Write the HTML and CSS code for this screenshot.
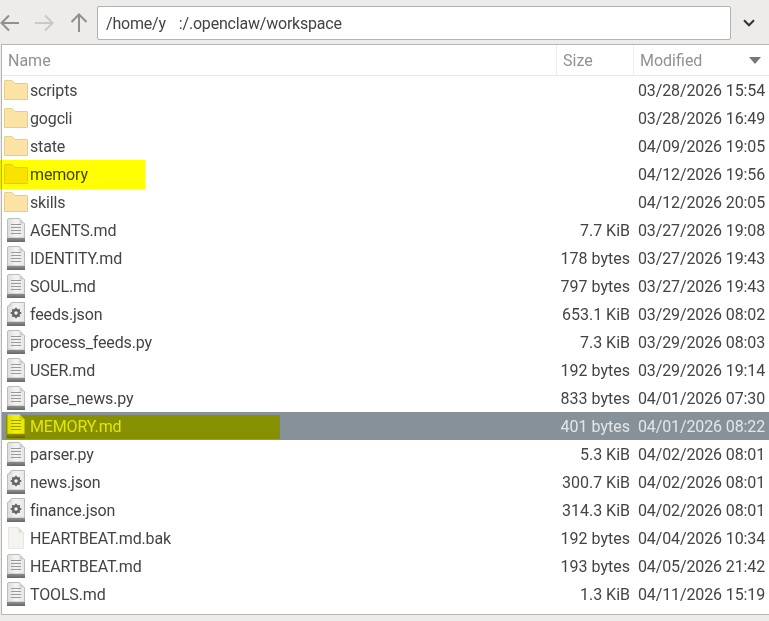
FILE: index.html
```html
<!DOCTYPE html>
<html lang="en">
<head>
<meta charset="utf-8">
<title>workspace</title>
<link rel="stylesheet" href="styles.css">
</head>
<body>
<svg class="defs" width="0" height="0" aria-hidden="true">
  <defs>
    <linearGradient id="shade" x1="0" y1="0" x2="0" y2="1">
      <stop offset="0" stop-color="#8f8f8f"/><stop offset="1" stop-color="#666"/>
    </linearGradient>
    <linearGradient id="paper" x1="0" y1="0" x2="1" y2="0">
      <stop offset="0" stop-color="#dcdcda"/><stop offset="0.5" stop-color="#f4f4f2"/><stop offset="1" stop-color="#e6e6e4"/>
    </linearGradient>
    <symbol id="folder" viewBox="0 0 24 20">
      <path d="M.5 19.500V1.200Q.5.5 1.200.5H8L11 3.500H23Q23.500 3.500 23.500 4V19.500Z" fill="#fae3a3" stroke="#e2cd92"/>
    </symbol>
    <symbol id="doc" viewBox="0 0 18 24">
      <path d="M.5 20V2Q.5.5 2 .5H12.500L17.500 5.500V20Z" fill="url(#paper)" stroke="#bcbcba"/>
      <path d="M12.500.5V5.500H17.500Z" fill="#d2d2d0"/>
      <rect x="0" y="20" width="18" height="4" fill="url(#shade)"/>
      <path d="M4 6.500H14M4 9.500H14M4 12.500H14M4 15.500H14" stroke="#9a9a9a" stroke-width="1.100"/>
    </symbol>
    <symbol id="cfg" viewBox="0 0 18 24">
      <path d="M.5 20V4.500L4.500.5H17.500V20Z" fill="url(#paper)" stroke="#bcbcba"/>
      <path d="M.5 4.500H4.500V.5Z" fill="#d2d2d0"/>
      <rect x="0" y="20" width="18" height="4" fill="url(#shade)"/>
      <circle cx="9" cy="11" r="3" fill="none" stroke="#666" stroke-width="2.400"/>
      <path d="M9 5.800V7.500M9 14.500V16.200M3.800 11H5.500M12.500 11H14.200M5.300 7.300L6.500 8.500M11.500 13.500L12.700 14.700M12.700 7.300L11.500 8.500M6.500 13.500L5.300 14.700" stroke="#666" stroke-width="1.800"/>
    </symbol>
    <symbol id="blank" viewBox="0 0 16 22">
      <path d="M.5 21.500V1Q.5.5 1 .5H10.500L15.500 5.500V21.500Z" fill="#f4f3f0" stroke="#e6e5e2"/>
      <path d="M10.500.5V5.500H15.500Z" fill="#dededc"/>
    </symbol>
  </defs>
</svg>

<div class="window">
  <header class="toolbar">
    <div class="nav">
      <svg class="nav-back" width="20" height="18" viewBox="0 0 20 18"><path d="M19 9H1.500M9 1.500L1.500 9L9 16.500" fill="none" stroke="#8f8f8f" stroke-width="2"/></svg>
      <svg class="nav-forward" width="20" height="18" viewBox="0 0 20 18"><path d="M1 9H18.500M11 1.500L18.500 9L11 16.500" fill="none" stroke="#c9c9c8" stroke-width="2"/></svg>
      <svg class="nav-up" width="18" height="20" viewBox="0 0 18 20"><path d="M9 19V1.500M1.500 9L9 1.500L16.500 9" fill="none" stroke="#8f8f8f" stroke-width="2"/></svg>
    </div>
    <div class="path"><span>/home/y</span><span class="path-gap"></span><span>:/.openclaw/workspace</span></div>
    <svg class="chevron" width="12" height="8" viewBox="0 0 12 8"><path d="M1 1.300L6 6.300L11 1.300" fill="none" stroke="#333" stroke-width="2"/></svg>
  </header>

  <main class="list">
    <div class="head">
      <div class="head-name">Name</div>
      <div class="head-size">Size</div>
      <div class="head-mod"><span>Modified</span><span class="sort"></span></div>
    </div>
    <div class="rows">
      <div class="row"><svg class="ico-folder"><use href="#folder"/></svg><span class="name">scripts</span><span class="size"></span><span class="date">03/28/2026 15:54</span></div>
      <div class="row"><svg class="ico-folder"><use href="#folder"/></svg><span class="name">gogcli</span><span class="size"></span><span class="date">03/28/2026 16:49</span></div>
      <div class="row"><svg class="ico-folder"><use href="#folder"/></svg><span class="name">state</span><span class="size"></span><span class="date">04/09/2026 19:05</span></div>
      <div class="row"><svg class="ico-folder"><use href="#folder"/></svg><span class="name">memory</span><span class="size"></span><span class="date">04/12/2026 19:56</span><span class="mark mark-folder"></span></div>
      <div class="row"><svg class="ico-folder"><use href="#folder"/></svg><span class="name">skills</span><span class="size"></span><span class="date">04/12/2026 20:05</span></div>
      <div class="row"><svg class="ico-file"><use href="#doc"/></svg><span class="name">AGENTS.md</span><span class="size">7.7 KiB</span><span class="date">03/27/2026 19:08</span></div>
      <div class="row"><svg class="ico-file"><use href="#doc"/></svg><span class="name">IDENTITY.md</span><span class="size">178 bytes</span><span class="date">03/27/2026 19:43</span></div>
      <div class="row"><svg class="ico-file"><use href="#doc"/></svg><span class="name">SOUL.md</span><span class="size">797 bytes</span><span class="date">03/27/2026 19:43</span></div>
      <div class="row"><svg class="ico-file"><use href="#cfg"/></svg><span class="name">feeds.json</span><span class="size">653.1 KiB</span><span class="date">03/29/2026 08:02</span></div>
      <div class="row"><svg class="ico-file"><use href="#doc"/></svg><span class="name">process_feeds.py</span><span class="size">7.3 KiB</span><span class="date">03/29/2026 08:03</span></div>
      <div class="row"><svg class="ico-file"><use href="#doc"/></svg><span class="name">USER.md</span><span class="size">192 bytes</span><span class="date">03/29/2026 19:14</span></div>
      <div class="row"><svg class="ico-file"><use href="#doc"/></svg><span class="name">parse_news.py</span><span class="size">833 bytes</span><span class="date">04/01/2026 07:30</span></div>
      <div class="row selected"><svg class="ico-file"><use href="#doc"/></svg><span class="name">MEMORY.md</span><span class="size">401 bytes</span><span class="date">04/01/2026 08:22</span><span class="mark mark-file"></span></div>
      <div class="row"><svg class="ico-file"><use href="#doc"/></svg><span class="name">parser.py</span><span class="size">5.3 KiB</span><span class="date">04/02/2026 08:01</span></div>
      <div class="row"><svg class="ico-file"><use href="#cfg"/></svg><span class="name">news.json</span><span class="size">300.7 KiB</span><span class="date">04/02/2026 08:01</span></div>
      <div class="row"><svg class="ico-file"><use href="#cfg"/></svg><span class="name">finance.json</span><span class="size">314.3 KiB</span><span class="date">04/02/2026 08:01</span></div>
      <div class="row"><svg class="ico-blank"><use href="#blank"/></svg><span class="name">HEARTBEAT.md.bak</span><span class="size">192 bytes</span><span class="date">04/04/2026 10:34</span></div>
      <div class="row"><svg class="ico-file"><use href="#doc"/></svg><span class="name">HEARTBEAT.md</span><span class="size">193 bytes</span><span class="date">04/05/2026 21:42</span></div>
      <div class="row"><svg class="ico-file"><use href="#doc"/></svg><span class="name">TOOLS.md</span><span class="size">1.3 KiB</span><span class="date">04/11/2026 15:19</span></div>
    </div>
  </main>
</div>
</body>
</html>
```
FILE: styles.css
```css
* { box-sizing: border-box; }
html, body { margin: 0; height: 100%; overflow: hidden; }
body {
  background: #edecea;
  font-family: Roboto, "Liberation Sans", sans-serif;
  font-size: 16px;
  color: #444;
}
.defs { position: absolute; }
.window { width: 769px; height: 621px; display: flex; flex-direction: column; }

.toolbar { height: 44px; display: flex; align-items: center; padding-top: 2px; }
.nav { display: flex; align-items: center; width: 97px; }
.nav-back { margin-right: 14px; }
.nav-forward { margin-right: 16px; }
.path {
  width: 634px; height: 34px; display: flex; align-items: center;
  padding: 0 8px; background: #fff;
  border: 1px solid #b3b2b0; border-radius: 2px;
  letter-spacing: -0.2px;
}
.path-gap { width: 13px; }
.chevron { margin-left: 12px; }

.list {
  height: 571px; margin-left: 1px;
  display: flex; flex-direction: column;
  background: #fff;
  border: 1px solid #b6b5b3; border-right: 0;
}
.head {
  height: 31px; display: flex; align-items: center;
  border-bottom: 1px solid #e8e8e6; color: #8e9195;
}
.head > div { height: 100%; display: flex; align-items: center; }
.head-name { width: 555px; padding-left: 6px; border-right: 1px solid #ececea; }
.head-size { width: 77px; padding-left: 6px; border-right: 1px solid #ececea; }
.head-mod { flex: 1; padding: 0 8px 0 6px; justify-content: space-between; }
.sort { width: 0; height: 0; border: 6px solid transparent; border-top: 7px solid #777; border-bottom: 0; }

.row {
  position: relative;
  height: 28px; display: flex; align-items: center;
}
.name { flex: 1; margin-left: 2px; letter-spacing: -0.15px; }
.size { width: 100px; text-align: right; }
.date { width: 131px; margin-left: 8px; white-space: nowrap; letter-spacing: -0.12px; }
.ico-folder { width: 24px; height: 20px; margin-left: 2px; margin-top: -1px; }
.ico-file { width: 18px; height: 24px; margin-left: 5px; margin-right: 3px; }
.ico-blank { width: 16px; height: 22px; margin-left: 6px; margin-right: 4px; }
.selected { background: #87919a; color: #e4e7e9; }

.mark { position: absolute; background: #ff0; mix-blend-mode: multiply; pointer-events: none; }
.mark-folder { left: -2px; top: 0; width: 145px; height: 29px; }
.mark-file { left: 4px; top: 3px; width: 274px; height: 24px; }
```
